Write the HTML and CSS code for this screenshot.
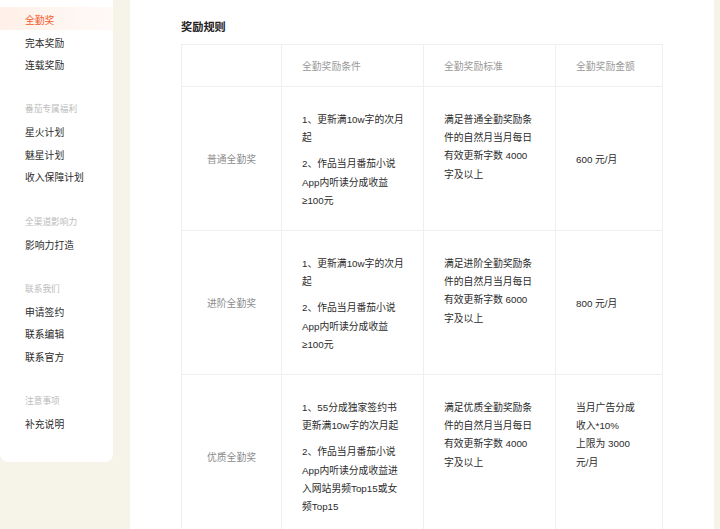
FILE: index.html
```html
<!DOCTYPE html>
<html lang="zh-CN">
<head>
<meta charset="utf-8">
<title>全勤奖</title>
<link rel="stylesheet" href="styles.css">
</head>
<body>
<div class="page">
  <aside class="sidebar">
    <div class="group">
      <a class="item active">全勤奖</a>
      <a class="item">完本奖励</a>
      <a class="item">连载奖励</a>
    </div>
    <div class="group">
      <div class="label">番茄专属福利</div>
      <a class="item">星火计划</a>
      <a class="item">魅星计划</a>
      <a class="item">收入保障计划</a>
    </div>
    <div class="group">
      <div class="label">全渠道影响力</div>
      <a class="item">影响力打造</a>
    </div>
    <div class="group">
      <div class="label">联系我们</div>
      <a class="item">申请签约</a>
      <a class="item">联系编辑</a>
      <a class="item">联系官方</a>
    </div>
    <div class="group">
      <div class="label">注意事项</div>
      <a class="item">补充说明</a>
    </div>
  </aside>
  <main class="main">
    <h2 class="title">奖励规则</h2>
    <table class="rules">
      <colgroup>
        <col class="c1"><col class="c2"><col class="c3"><col class="c4">
      </colgroup>
      <thead>
        <tr>
          <th></th>
          <th>全勤奖励条件</th>
          <th>全勤奖励标准</th>
          <th>全勤奖励金额</th>
        </tr>
      </thead>
      <tbody>
        <tr>
          <td class="name">普通全勤奖</td>
          <td class="cond"><p>1、更新满10w字的次月起</p><p>2、作品当月番茄小说App内听读分成收益≥100元</p></td>
          <td class="top"><p>满足普通全勤奖励条件的自然月当月每日有效更新字数 4000 字及以上</p></td>
          <td class="mid"><p>600 元/月</p></td>
        </tr>
        <tr>
          <td class="name">进阶全勤奖</td>
          <td class="cond"><p>1、更新满10w字的次月起</p><p>2、作品当月番茄小说App内听读分成收益≥100元</p></td>
          <td class="top"><p>满足进阶全勤奖励条件的自然月当月每日有效更新字数 6000 字及以上</p></td>
          <td class="mid"><p>800 元/月</p></td>
        </tr>
        <tr>
          <td class="name">优质全勤奖</td>
          <td class="cond"><p>1、55分成独家签约书更新满10w字的次月起</p><p>2、作品当月番茄小说App内听读分成收益进入网站男频Top15或女频Top15</p></td>
          <td class="top"><p>满足优质全勤奖励条件的自然月当月每日有效更新字数 4000 字及以上</p></td>
          <td class="top"><p>当月广告分成收入*10%<br>上限为 3000 元/月</p></td>
        </tr>
      </tbody>
    </table>
  </main>
</div>
</body>
</html>
```

FILE: styles.css
```css
html, body {
  margin: 0;
  padding: 0;
  overflow: hidden;
}
body {
  background: #f6f3e9;
  font-family: "Liberation Sans", "Noto Sans CJK SC", sans-serif;
  font-size: 10px;
  color: #333333;
}
.page {
  display: flex;
  align-items: flex-start;
  gap: 17px;
  width: 720px;
  height: 529px;
}
.sidebar {
  flex: 0 0 113px;
  background: #ffffff;
  border-radius: 0 0 8px 8px;
  padding: 7px 0 28px;
  display: flex;
  flex-direction: column;
  gap: 19.5px;
}
.group {
  display: flex;
  flex-direction: column;
}
.item {
  display: block;
  box-sizing: border-box;
  height: 22.6px;
  padding: 5px 0 0 25px;
  line-height: 17.6px;
  font-size: 9.8px;
  color: #2b2b2b;
  white-space: nowrap;
}
.item.active {
  color: #f4592b;
  background: linear-gradient(90deg, #fff0e8 0%, #fff6f1 60%, #fffaf8 100%);
}
.label {
  box-sizing: border-box;
  height: 25px;
  padding: 6px 0 0 25px;
  line-height: 19px;
  font-size: 8.7px;
  color: #bbbbbb;
  white-space: nowrap;
}
.main {
  flex: 0 0 481px;
  background: #ffffff;
  padding: 19px 51px 0;
  align-self: stretch;
}
.title {
  margin: 0 0 9px;
  font-size: 11.2px;
  line-height: 16px;
  font-weight: bold;
  color: #222222;
}
.rules {
  width: 481px;
  table-layout: fixed;
  border-collapse: collapse;
  border: 1px solid #efefef;
}
.rules col.c1 { width: 100px; }
.rules col.c2 { width: 142px; }
.rules col.c3 { width: 132px; }
.rules col.c4 { width: 107px; }
.rules th, .rules td {
  border: 1px solid #efefef;
  text-align: left;
  font-size: 9.8px;
  line-height: 18.2px;
}
.rules th {
  padding: 13px 20px 10px;
  line-height: 18px;
  font-weight: normal;
  color: #999999;
}
.rules td {
  padding: 24px 20px 20px;
  vertical-align: top;
  color: #2b2b2b;
}
.rules td.cond {
  padding-right: 18px;
}
.rules td.name {
  text-align: center;
  vertical-align: middle;
  color: #8c8c8c;
  padding: 4px 10px 0;
}
.rules td.mid { vertical-align: middle; }
.rules td.top { vertical-align: top; }
.rules p {
  margin: 0 0 8px;
}
.rules p:last-child {
  margin-bottom: 0;
}
```
